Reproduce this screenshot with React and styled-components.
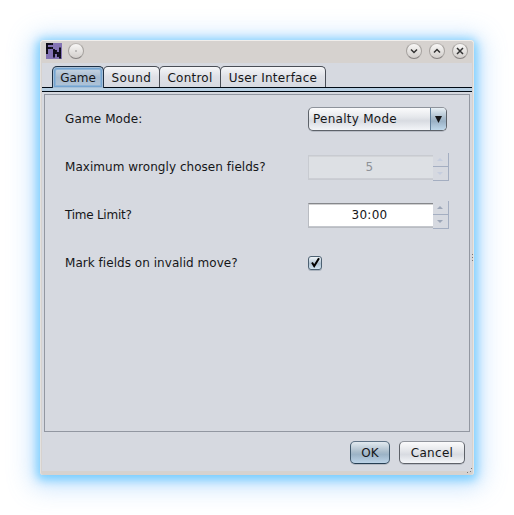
import React from "react";
import styled, { createGlobalStyle, css } from "styled-components";

const Global = createGlobalStyle`
  * { box-sizing: border-box; }
  body { margin: 0; background: #fff; font: 12px/14px "DejaVu Sans", sans-serif; color: #151618; overflow: hidden; }
`;

const Desktop = styled.div`
  width: 514px;
  height: 515px;
  padding: 40px;
  overflow: hidden;
`;

const Window = styled.main`
  display: flex;
  flex-direction: column;
  width: 434px;
  height: 435px;
  padding: 0 2px 4px;
  background: #d6d2cf;
  border-radius: 4px 4px 3px 3px;
  position: relative;
  box-shadow: 0 2px 10px 3px rgba(100, 200, 255, 0.8), 0 4px 24px 8px rgba(120, 185, 250, 0.42),
    inset 0 1px 0 #f0eeec, inset 1px 0 0 #e4e1de, inset -1px 0 0 #e8e4e0;
`;

const TitleBar = styled.header`
  display: flex;
  align-items: flex-start;
  flex: 0 0 23px;
  padding: 3px 4px 0;
`;

const AppIcon = styled.svg`
  width: 16px;
  height: 16px;
  display: block;
  margin-right: 6px;
`;

const WindowButtons = styled.div`
  display: flex;
  gap: 7px;
  margin-left: auto;
`;

const RoundButton = styled.button`
  width: 16px;
  height: 16px;
  padding: 0;
  border: 1px solid #a5a19e;
  border-top-color: #bbb7b4;
  border-bottom-color: #858180;
  border-radius: 50%;
  background: linear-gradient(#f8f7f6, #d2cecb);
  display: grid;
  place-items: center;
  svg { display: block; }
`;

const Body = styled.div`
  flex: 1;
  display: flex;
  flex-direction: column;
  background: #d6d9e0;
  min-height: 0;
`;

const Tabs = styled.nav`
  display: flex;
  height: 24px;
  padding: 3px 0 0 10px;
`;

const Tab = styled.button`
  width: ${(p) => p.$width}px;
  height: 22px;
  margin-right: -1px;
  padding: 0;
  border: 1px solid #4a4e56;
  border-bottom: 0;
  border-radius: 5px 5px 0 0;
  font: inherit;
  line-height: 20px;
  letter-spacing: ${(p) => p.$spacing || 0}px;
  color: inherit;
  background: linear-gradient(#f5f6f8, #dfe1e7 45%, #d6d9e0);
  ${(p) =>
    p.$selected &&
    css`
      border-color: #1d2f43;
      background: linear-gradient(#cddae6, #a6bace 50%, #b1c6db);
      box-shadow: inset 0 0 0 1px #a6bfd7, inset 0 0 0 2px #73a4d1, inset 0 0 0 3px #8fb4d6;
      position: relative;
    `}
`;

const TabRule = styled.div`
  height: 5px;
  border: solid #000a14;
  border-width: 1px 0;
  background: #b6cfe3;
`;

const Panel = styled.section`
  height: 338px;
  margin: 2px 2px 0;
  padding: 0 20px;
  border: 1px solid #9297a1;
`;

const Row = styled.div`
  display: grid;
  grid-template-columns: 243px 141px;
  align-items: center;
  height: 48px;
`;

const Label = styled.label`
  white-space: nowrap;
  letter-spacing: ${(p) => p.$spacing}px;
`;

const Combo = styled.div`
  display: flex;
  width: 139px;
  height: 24px;
  border: 1px solid #5d6269;
  border-top-color: #8e939b;
  border-radius: 5px;
  overflow: hidden;
  line-height: 23px;
  background: linear-gradient(#fbfbfc, #e6e8ec 40%, #d8dbe1 58%, #f3f5f8);
  box-shadow: 0 1px 0 #b9bdc6;
`;

const ComboText = styled.span`
  flex: 1;
  padding-left: 4px;
  letter-spacing: 0.26px;
`;

const ComboArrow = styled.span`
  width: 16px;
  border-left: 1px solid #62819d;
  background: linear-gradient(#e8f0f5, #a8bccc 45%, #9ab1c5 60%, #bfd8eb);
  display: grid;
  place-items: center;
`;

const Spinner = styled.div`
  display: flex;
  width: 141px;
  height: 28px;
  align-items: center;
`;

const SpinText = styled.span`
  width: 125px;
  height: 25px;
  line-height: 22px;
  text-align: center;
  letter-spacing: 0.25px;
  padding-right: 3px;
  border: 1px solid #b9bcc2;
  border-top: 1px solid #85878b;
  border-right: 0;
  background: #fff;
  box-shadow: inset 0 1px 0 #d0d0d1, inset 0 -1px 0 #c4c7cd;
  ${(p) =>
    p.$disabled &&
    css`
      color: #8e9197;
      background: #dde0e4;
      border-color: #c8cbd1;
      box-shadow: inset 0 1px 0 #d2d4d8, inset 0 -1px 0 #ccced4;
    `}
`;

const SpinButtons = styled.span`
  display: grid;
  grid-template-rows: 14px 14px;
  width: 16px;
  height: 28px;
`;

const SpinButton = styled.span`
  border: solid #a4aec1;
  border-width: 0 1px 1px 0;
  display: grid;
  place-items: center;
  padding-right: 2px;
  color: ${(p) => (p.$disabled ? "#c6cede" : "#9ca6b7")};
`;

const CheckBox = styled.span`
  width: 14px;
  height: 14px;
  border: 1px solid #4d6172;
  border-radius: 3px;
  background: linear-gradient(#f0f5f8, #afc2d2 55%, #d2e4f1);
  box-shadow: 0 1px 0 #aab2bd;
  svg { display: block; overflow: visible; }
`;

const Actions = styled.footer`
  display: flex;
  justify-content: flex-end;
  gap: 9px;
  padding: 9px 7px 0 0;
`;

const ActionButton = styled.button`
  width: ${(p) => p.$width}px;
  height: 23px;
  padding: 0;
  border: 1px solid #5e6269;
  border-top-color: #91959d;
  border-radius: 5px;
  font: inherit;
  line-height: 22px;
  letter-spacing: 0.3px;
  color: inherit;
  background: linear-gradient(#fbfbfc, #e5e7eb 40%, #d8dbe1 60%, #f4f6f9);
  box-shadow: 0 1px 0 #b7bbc4;
  ${(p) =>
    p.$primary &&
    css`
      letter-spacing: 0;
      border-color: #5f7386 #40586c #263e52;
      background: linear-gradient(#e2eaf0, #a8bbca 48%, #9cb3c6 60%, #bdd4e8);
    `}
`;

const Grip = styled.svg`
  position: absolute;
  right: ${(p) => (p.$side ? 0 : 1)}px;
  ${(p) => (p.$side ? "top: 214px;" : "bottom: 1px;")}
`;

const Triangle = ({ up, w = 5, h = 3 }) => (
  <svg width={w} height={h} viewBox="0 0 10 10" preserveAspectRatio="none">
    <path d={up ? "M0 10L5 0L10 10Z" : "M0 0H10L5 10Z"} fill="currentColor" />
  </svg>
);

const controls = ["M4 5.5L7 8.5L10 5.5", "M4 8.5L7 5.5L10 8.5", "M4 4L10 10M10 4L4 10"];

function NumberSpinner({ value, disabled }) {
  return (
    <Spinner>
      <SpinText $disabled={disabled}>{value}</SpinText>
      <SpinButtons>
        <SpinButton $disabled={disabled}><Triangle up w={6} /></SpinButton>
        <SpinButton $disabled={disabled}><Triangle w={6} /></SpinButton>
      </SpinButtons>
    </Spinner>
  );
}

export default function App() {
  return (
    <Desktop>
      <Global />
      <Window>
        <TitleBar>
          <AppIcon viewBox="0 0 16 16">
            <path fill="#8474b5" d="M0 0H16V16H0Z" />
            <path fill="none" stroke="#0c0a16" strokeWidth="2" d="M1 11V1H7M1 5H7M8 14.5V6M14 15.5V4.5M8 8H10V10H12V13H14" />
            <path fill="none" stroke="#8474b5" strokeOpacity=".25" strokeWidth=".4" d="M0 3.2H16M0 6.6H16M0 8.9H16M0 11.3H16M0 13.6H16M3.1 0V16M5.5 0V16M10.4 0V16M12.8 0V16" />
          </AppIcon>
          <RoundButton aria-label="Menu">
            <svg width="14" height="14"><path d="M6.5 6.5h1v1h-1z" fill="#444" /></svg>
          </RoundButton>
          <WindowButtons>
            {controls.map((d) => (
              <RoundButton key={d}>
                <svg width="14" height="14"><path d={d} stroke="#333" strokeWidth="1.5" fill="none" /></svg>
              </RoundButton>
            ))}
          </WindowButtons>
        </TitleBar>
        <Body>
          <Tabs>
            <Tab $width={52} $selected>Game</Tab>
            <Tab $width={57} $spacing={0.4}>Sound</Tab>
            <Tab $width={62} $spacing={0.25}>Control</Tab>
            <Tab $width={106} $spacing={0.25}>User Interface</Tab>
          </Tabs>
          <TabRule />
          <Panel>
            <Row>
              <Label $spacing={0.12}>Game Mode:</Label>
              <Combo>
                <ComboText>Penalty Mode</ComboText>
                <ComboArrow><Triangle w={7} h={7} /></ComboArrow>
              </Combo>
            </Row>
            <Row><Label $spacing={0.04}>Maximum wrongly chosen fields?</Label><NumberSpinner value="5" disabled /></Row>
            <Row><Label $spacing={-0.25}>Time Limit?</Label><NumberSpinner value="30:00" /></Row>
            <Row>
              <Label $spacing={0.04}>Mark fields on invalid move?</Label>
              <CheckBox>
                <svg width="12" height="12"><path d="M3 5.5L5.2 9L10 1.2" stroke="#000" strokeWidth="2" fill="none" /></svg>
              </CheckBox>
            </Row>
          </Panel>
          <Actions>
            <ActionButton $width={40} $primary>OK</ActionButton>
            <ActionButton $width={66}>Cancel</ActionButton>
          </Actions>
        </Body>
        <Grip $side width="2" height="8"><path d="M0 0h1v1H0zM0 3h1v1H0zM0 6h1v1H0z" fill="#777" /></Grip>
        <Grip width="6" height="6"><path d="M4 0h1v1H4zM3 3h1v1H3zM0 4h1v1H0z" fill="#777" /></Grip>
      </Window>
    </Desktop>
  );
}
